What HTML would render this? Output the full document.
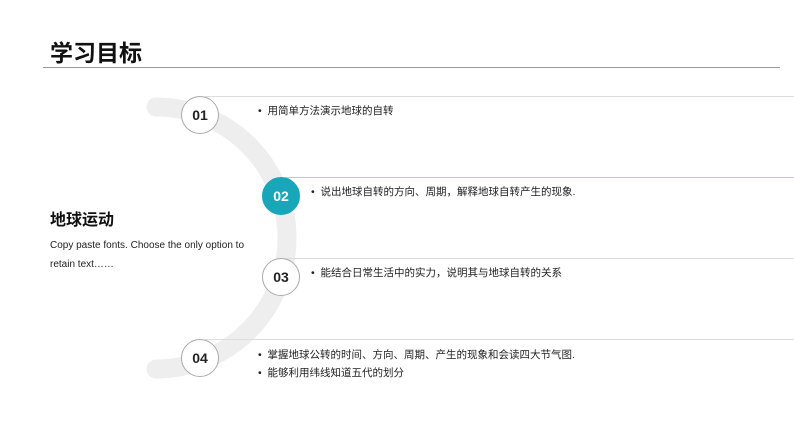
<html><head><style>
body{margin:0;width:794px;height:447px;background:#fff;position:relative;overflow:hidden;font-family:"Liberation Sans","Noto Sans CJK SC",sans-serif}
.a{position:absolute}
.c{position:absolute;width:36px;height:36px;border-radius:50%;border:1px solid #aaa;background:#fff;font-weight:bold;font-size:14px;line-height:36px;text-align:center;color:#222}
.t{position:absolute;font-size:10.5px;color:#222;white-space:nowrap}
.l{position:absolute;height:1px;background:#ddd;right:0}
</style></head><body>
<div class="a" style="left:50px;top:34px;font-size:23px;font-weight:bold;color:#111">学习目标</div>
<div class="a" style="left:43px;top:67px;width:737px;height:1px;background:#999"></div>
<svg class="a" style="left:0;top:0" width="794" height="447"><path d="M156 107 A131 131 0 0 1 156 369" fill="none" stroke="#eeeeee" stroke-width="19" stroke-linecap="round"/></svg>
<div class="l" style="left:205px;top:96px"></div>
<div class="l" style="left:285px;top:177px;background:#a8d5dc"></div>
<div class="l" style="left:285px;top:258px"></div>
<div class="l" style="left:205px;top:339px"></div>
<div class="c" style="left:181px;top:96px">01</div>
<div class="c" style="left:262px;top:177px;background:#18a7b8;border-color:#18a7b8;color:#fff">02</div>
<div class="c" style="left:262px;top:258px">03</div>
<div class="c" style="left:181px;top:339px">04</div>
<div class="t" style="left:258px;top:103px">•&nbsp; 用简单方法演示地球的自转</div>
<div class="t" style="left:311px;top:184px">•&nbsp; 说出地球自转的方向、周期，解释地球自转产生的现象.</div>
<div class="t" style="left:311px;top:265px">•&nbsp; 能结合日常生活中的实力，说明其与地球自转的关系</div>
<div class="t" style="left:258px;top:347px">•&nbsp; 掌握地球公转的时间、方向、周期、产生的现象和会读四大节气图.</div>
<div class="t" style="left:258px;top:365px">•&nbsp; 能够利用纬线知道五代的划分</div>
<div class="a" style="left:50px;top:206px;font-size:16px;font-weight:bold;color:#111">地球运动</div>
<div class="a" style="left:50px;top:236px;font-size:10px;color:#222;line-height:19px;width:210px">Copy paste fonts. Choose the only option to retain text……</div>
</body></html>
